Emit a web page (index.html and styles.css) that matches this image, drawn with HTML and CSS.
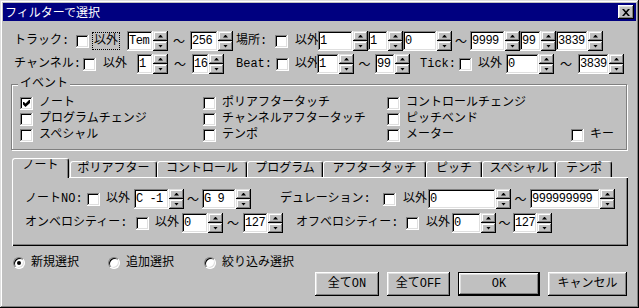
FILE: index.html
```html
<!DOCTYPE html>
<html lang="ja">
<head>
<meta charset="utf-8">
<title>フィルターで選択</title>
<link rel="stylesheet" href="styles.css">
</head>
<body>
<div class="win">
  <div class="titlebar">
    <span class="title">フィルターで選択</span>
    <span class="close"><svg width="8" height="7" viewBox="0 0 8 7"><path d="M0 0h2l2 2.3L6 0h2L5 3.5 8 7H6L4 4.7 2 7H0l3-3.5z" fill="#000"/></svg></span>
  </div>

  <div class="row r1">
    <span>トラック:</span>
    <span class="cb"></span>
    <span><span class="focus">以外</span></span>
    <span class="spin"><span class="fld">Tem</span><span class="ud"><i></i><i></i></span></span>
    <span class="tl">～</span>
    <span class="spin"><span class="fld">256</span><span class="ud"><i></i><i></i></span></span>
    <span class="pl3">場所:</span>
    <span class="cb"></span>
    <span>以外</span>
    <span class="spin"><span class="fld">1</span><span class="ud"><i></i><i></i></span></span>
    <span class="spin"><span class="fld">1</span><span class="ud"><i></i><i></i></span></span>
    <span class="spin"><span class="fld">0</span><span class="ud"><i></i><i></i></span></span>
    <span class="tl">～</span>
    <span class="spin"><span class="fld">9999</span><span class="ud"><i></i><i></i></span></span>
    <span class="spin"><span class="fld">99</span><span class="ud"><i></i><i></i></span></span>
    <span class="spin"><span class="fld">3839</span><span class="ud"><i></i><i></i></span></span>
  </div>

  <div class="row r2">
    <span>チャンネル:</span>
    <span class="cb"></span>
    <span>以外</span>
    <span class="spin"><span class="fld">1</span><span class="ud"><i></i><i></i></span></span>
    <span class="tl">～</span>
    <span class="spin"><span class="fld">16</span><span class="ud"><i></i><i></i></span></span>
    <span class="pl12">Beat:</span>
    <span class="cb"></span>
    <span>以外</span>
    <span class="spin"><span class="fld">1</span><span class="ud"><i></i><i></i></span></span>
    <span class="tl">～</span>
    <span class="spin"><span class="fld">99</span><span class="ud"><i></i><i></i></span></span>
    <span class="pl10">Tick:</span>
    <span class="cb"></span>
    <span>以外</span>
    <span class="spin"><span class="fld">0</span><span class="ud"><i></i><i></i></span></span>
    <span class="tl">～</span>
    <span class="spin"><span class="fld">3839</span><span class="ud"><i></i><i></i></span></span>
  </div>

  <div class="group">
    <div class="group-title">イベント</div>
    <div class="ev">
      <span class="ck"><span class="cb"><svg width="7" height="7" viewBox="0 0 7 7"><path d="M0 2h1l1.5 1.5L6 0h1v3L2.5 7 0 4.5z" fill="#000"/></svg></span>ノート</span>
      <span class="ck"><span class="cb"></span>ポリアフタータッチ</span>
      <span class="ck"><span class="cb"></span>コントロールチェンジ</span>
      <span class="ck c1"><span class="cb"></span>プログラムチェンジ</span>
      <span class="ck"><span class="cb"></span>チャンネルアフタータッチ</span>
      <span class="ck"><span class="cb"></span>ピッチベンド</span>
      <span class="ck c1"><span class="cb"></span>スペシャル</span>
      <span class="ck"><span class="cb"></span>テンポ</span>
      <span class="ck"><span class="cb"></span>メーター</span>
      <span class="ck"><span class="cb"></span>キー</span>
    </div>
  </div>

  <div class="tabs">
    <span class="tab sel t-note">ノート</span>
    <span class="tab t-poly">ポリアフター</span>
    <span class="tab t-ctrl">コントロール</span>
    <span class="tab t-prog">プログラム</span>
    <span class="tab t-after">アフタータッチ</span>
    <span class="tab t-pitch">ピッチ</span>
    <span class="tab t-sp">スペシャル</span>
    <span class="tab t-tempo">テンポ</span>
  </div>
  <div class="panel">
    <div class="row p1">
      <span>ノートNO:</span>
      <span class="cb"></span>
      <span>以外</span>
      <span class="spin"><span class="fld">C -1</span><span class="ud"><i></i><i></i></span></span>
      <span class="tl">～</span>
      <span class="spin"><span class="fld">G 9</span><span class="ud"><i></i><i></i></span></span>
      <span class="pl29">デュレーション:</span>
      <span class="cb"></span>
      <span>以外</span>
      <span class="spin"><span class="fld">0</span><span class="ud"><i></i><i></i></span></span>
      <span class="tl">～</span>
      <span class="spin"><span class="fld">999999999</span><span class="ud"><i></i><i></i></span></span>
    </div>
    <div class="row p2">
      <span>オンベロシティー:</span>
      <span class="cb"></span>
      <span>以外</span>
      <span class="spin"><span class="fld">0</span><span class="ud"><i></i><i></i></span></span>
      <span class="tl">～</span>
      <span class="spin"><span class="fld">127</span><span class="ud"><i></i><i></i></span></span>
      <span class="pl13">オフベロシティー:</span>
      <span class="cb"></span>
      <span>以外</span>
      <span class="spin"><span class="fld">0</span><span class="ud"><i></i><i></i></span></span>
      <span class="tl">～</span>
      <span class="spin"><span class="fld">127</span><span class="ud"><i></i><i></i></span></span>
    </div>
  </div>

  <div class="radios">
    <span class="rd"><span class="radio on"></span>新規選択</span>
    <span class="rd"><span class="radio"></span>追加選択</span>
    <span class="rd"><span class="radio"></span>絞り込み選択</span>
  </div>

  <div class="btns">
    <span class="btn">全てON</span>
    <span class="btn">全てOFF</span>
    <span class="btn def">OK</span>
    <span class="btn">キャンセル</span>
  </div>
</div>
</body>
</html>
```

FILE: styles.css
```css
* { box-sizing: border-box; }
html, body { margin: 0; padding: 0; background: #c0c0c0; }
body {
  font-family: "Liberation Mono", "Noto Sans CJK JP", monospace;
  font-size: 12px;
  line-height: 14px;
  color: #000;
}

.win {
  width: 639px;
  height: 308px;
  background: #c0c0c0;
  overflow: hidden;
  white-space: nowrap;
  box-shadow: inset -1px -1px #000, inset 1px 1px #dfdfdf, inset -2px -2px #808080, inset 2px 2px #fff;
}

.titlebar {
  margin: 3px 3px 0;
  height: 18px;
  background: #000080;
  color: #fff;
  display: flex;
  align-items: center;
  justify-content: space-between;
  padding: 0 2px;
}
.title { font-family: "Noto Sans CJK JP", sans-serif; }
.close {
  width: 16px;
  height: 14px;
  background: #c0c0c0;
  display: flex;
  align-items: center;
  justify-content: center;
  box-shadow: inset -1px -1px #000, inset 1px 1px #fff, inset -2px -2px #808080, inset 2px 2px #dfdfdf;
}
.close svg { display: block; }

/* generic rows */
.row { display: grid; height: 20px; align-items: center; }
.r1 {
  margin-top: 10px;
  padding-left: 14px;
  grid-template-columns: 62px 16px 35px 41px 22px 43px 42px 20px 23px 50px 35px 49px 18px 50px 36px 47px;
}
.r2 {
  margin-top: 3px;
  padding-left: 14px;
  grid-template-columns: 69px 20px 34px 31px 24px 32px 52px 19px 22px 37px 21px 35px 49px 19px 28px 48px 24px 46px;
}
.pl3 { padding-left: 3px; }
.pl10 { padding-left: 10px; }
.pl12 { padding-left: 12px; }
.pl13 { padding-left: 13px; }
.pl29 { padding-left: 29px; }

.tl { text-align: center; font-family: "Noto Sans CJK JP", sans-serif; }

.focus {
  display: inline-block;
  border: 1px dotted #000;
  padding: 1px 1px;
}

/* checkbox */
.cb {
  width: 13px;
  height: 13px;
  background: #fff;
  display: flex;
  align-items: center;
  justify-content: center;
  box-shadow: inset -1px -1px #fff, inset 1px 1px #808080, inset -2px -2px #dfdfdf, inset 2px 2px #000;
}
.cb svg { display: block; }

/* spin edit */
.spin { display: flex; height: 20px; }
.fld {
  flex: 1;
  min-width: 0;
  overflow: hidden;
  background: #fff;
  padding: 0 0 0 2px;
  line-height: 20px;
  letter-spacing: -0.5px;
  box-shadow: inset -1px -1px #fff, inset 1px 1px #808080, inset -2px -2px #dfdfdf, inset 2px 2px #000;
}
.ud { width: 15px; flex: none; display: flex; flex-direction: column; }
.ud i {
  flex: 1;
  display: flex;
  align-items: center;
  justify-content: center;
  background: #c0c0c0;
  box-shadow: inset -1px -1px #000, inset 1px 1px #dfdfdf, inset -2px -2px #808080, inset 2px 2px #fff;
}
.ud i::after {
  content: "";
  width: 5px;
  height: 3px;
  background: #000;
  clip-path: polygon(50% 0, 100% 100%, 0 100%);
}
.ud i + i::after { clip-path: polygon(0 0, 100% 0, 50% 100%); }

/* event group */
.group {
  margin: 10px 0 0 11px;
  width: 616px;
  height: 66px;
  padding: 0 0 0 8px;
  border: 1px solid #808080;
  box-shadow: inset 1px 1px #fff, 1px 1px #fff;
}
.group-title {
  display: table;
  margin: -7px 0 0 -2px;
  padding: 0 2px;
  line-height: 13px;
  background: #c0c0c0;
}
.ev {
  margin-top: 4px;
  display: grid;
  grid-template-columns: 183px 184px 184px auto;
  grid-auto-rows: 16px;
}
.ck { display: flex; align-items: center; gap: 6px; }
.c1 { grid-column: 1; }

/* tabs */
.tabs {
  margin-top: 8px;
  padding-left: 12px;
  height: 19px;
  display: flex;
  align-items: flex-end;
  position: relative;
  z-index: 1;
}
.tab {
  height: 16px;
  border: 1px solid #fff;
  border-bottom: 0;
  border-right-color: #000;
  border-radius: 3px 3px 0 0;
  box-shadow: inset -1px 0 #808080;
  text-align: center;
  line-height: 14px;
  background: #c0c0c0;
}
.tab.sel { height: 20px; margin-bottom: -1px; margin-right: 1px; }
.t-note { width: 57px; }
.t-poly { width: 87px; }
.t-ctrl { width: 90px; }
.t-prog { width: 76px; }
.t-after { width: 103px; }
.t-pitch { width: 56px; }
.t-sp { width: 74px; }
.t-tempo { width: 56px; }

.panel {
  margin-left: 12px;
  width: 616px;
  height: 69px;
  padding: 12px 0 0 13px;
  box-shadow: inset 1px 1px #fff, inset -1px -1px #000, inset -2px -2px #808080;
}
.p1 { grid-template-columns: 62px 19px 28px 50px 18px 49px 132px 20px 25px 83px 19px 85px; }
.p2 {
  margin-top: 4px;
  grid-template-columns: 111px 19px 27px 41px 20px 40px 123px 20px 26px 44px 17px 39px;
}

/* radios */
.radios {
  margin-top: 10px;
  padding-left: 13px;
  height: 14px;
  display: grid;
  grid-template-columns: 95px 96px auto;
  align-items: center;
}
.rd { display: flex; align-items: center; gap: 6px; }
.radio {
  width: 12px;
  height: 12px;
  border-radius: 50%;
  background: #fff;
  border: 1px solid;
  border-color: #808080 #fff #fff #808080;
  box-shadow: inset 1px 1px #000, inset -1px -1px #dfdfdf;
  display: flex;
  align-items: center;
  justify-content: center;
}
.radio.on::after {
  content: "";
  width: 4px;
  height: 4px;
  border-radius: 50%;
  background: #000;
}

/* buttons */
.btns {
  margin-top: 2px;
  padding-left: 315px;
  height: 24px;
  display: grid;
  grid-template-columns: 64px 63px 82px 79px;
  column-gap: 8px;
}
.btn {
  display: flex;
  align-items: center;
  justify-content: center;
  background: #c0c0c0;
  box-shadow: inset -1px -1px #000, inset 1px 1px #fff, inset -2px -2px #808080, inset 2px 2px #dfdfdf;
}
.btn.def {
  border: 1px solid #000;
  box-shadow: inset -1px -1px #000, inset 1px 1px #fff, inset -2px -2px #808080, inset 2px 2px #dfdfdf;
}
```
